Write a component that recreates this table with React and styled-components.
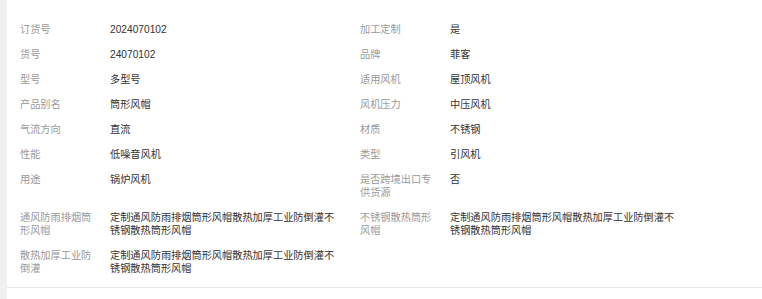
import React from 'react'
import styled, { createGlobalStyle } from 'styled-components'

const rows = [
  [['订货号', '2024070102'], ['加工定制', '是']],
  [['货号', '24070102'], ['品牌', '菲客']],
  [['型号', '多型号'], ['适用风机', '屋顶风机']],
  [['产品别名', '筒形风帽'], ['风机压力', '中压风机']],
  [['气流方向', '直流'], ['材质', '不锈钢']],
  [['性能', '低噪音风机'], ['类型', '引风机']],
  [['用途', '锅炉风机'], ['是否跨境出口专供货源', '否']],
  [
    ['通风防雨排烟筒形风帽', '定制通风防雨排烟筒形风帽散热加厚工业防倒灌不锈钢散热筒形风帽'],
    ['不锈钢散热筒形风帽', '定制通风防雨排烟筒形风帽散热加厚工业防倒灌不锈钢散热筒形风帽'],
  ],
  [['散热加厚工业防倒灌', '定制通风防雨排烟筒形风帽散热加厚工业防倒灌不锈钢散热筒形风帽']],
]

function App() {
  return (
    <Page>
      <GlobalStyle />
      <Side />
      <Panel>
        <Table>
          {rows.map((row, i) => (
            <Row key={i}>
              {row.map(([label, value]) => (
                <Cell key={label}>
                  <Label>{label}</Label>
                  <Value>{value}</Value>
                </Cell>
              ))}
            </Row>
          ))}
        </Table>
      </Panel>
    </Page>
  )
}

export default App

const GlobalStyle = createGlobalStyle`
  html, body {
    margin: 0;
    padding: 0;
    background: #fff;
  }
  body {
    font-family: "Liberation Sans", "Noto Sans CJK SC", sans-serif;
  }
`
const Page = styled.div`
  display: flex;
  width: 762px;
  height: 299px;
  overflow: hidden;
`
const Side = styled.div`
  width: 7px;
  flex-shrink: 0;
  background: #f0f0f0;
`
const Panel = styled.div`
  flex: 1;
  display: flex;
  flex-direction: column;
`
const Table = styled.div`
  display: flex;
  flex-direction: column;
  gap: 12px;
  padding: 23px 0 12px 13px;
  border-bottom: 1px solid #e6e6e6;
`
const Row = styled.div`
  display: grid;
  grid-template-columns: 340px 340px;
`
const Cell = styled.div`
  display: flex;
  font-size: 10.2px;
  line-height: 13px;
`
const Label = styled.div`
  width: 90px;
  flex-shrink: 0;
  padding-right: 13px;
  box-sizing: border-box;
  color: #9a9a9a;
`
const Value = styled.div`
  width: 230px;
  color: #333;
`
